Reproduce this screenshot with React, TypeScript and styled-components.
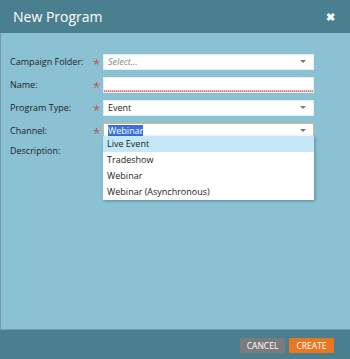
import styled, { createGlobalStyle } from "styled-components";

const GlobalStyle = createGlobalStyle`
  html, body {
    margin: 0;
    padding: 0;
    width: 350px;
    height: 359px;
    overflow: hidden;
  }
  body {
    font-family: "Open Sans", "Noto Sans", sans-serif;
  }
`;

const Dialog = styled.div`
  width: 350px;
  height: 359px;
  display: flex;
  flex-direction: column;
  box-sizing: border-box;
`;

const Header = styled.div`
  height: 33px;
  flex: none;
  background-color: #497f8f;
  display: flex;
  align-items: center;
  justify-content: space-between;
  padding: 0 15px 0 13px;
`;

const Title = styled.h2`
  margin: 0;
  font-size: 14px;
  font-weight: 400;
  color: #ffffff;
`;

const CloseButton = styled.span`
  color: #ffffff;
  font-size: 11px;
  font-weight: 700;
  line-height: 1;
  cursor: pointer;
`;

const Body = styled.div`
  flex: 1;
  background-color: #8ac1d3;
  border-left: 1px solid #7a98a2;
  padding: 18px 0 0 9px;
  display: flex;
  flex-direction: column;
  gap: 7px;
`;

const Row = styled.div`
  display: grid;
  grid-template-columns: 81px 12px 211px;
  align-items: center;
  height: 16px;
  position: relative;
`;

const Label = styled.label`
  font-size: 9px;
  color: #222;
  line-height: 16px;
  white-space: nowrap;
`;

const Required = styled.span`
  color: #c0504d;
  font-size: 13px;
  line-height: 16px;
  padding-top: 5px;
  padding-left: 2px;
`;

const Field = styled.div<{ $focused?: boolean; $spell?: boolean }>`
  box-sizing: border-box;
  height: 16px;
  background-color: #fff;
  border: 1px solid ${(p) => (p.$focused ? "#d9b98c" : "#e4eef1")};
  display: flex;
  align-items: center;
  justify-content: space-between;
  padding: 0 7px 0 4px;
  font-size: 9px;
  color: #222;
  position: relative;
  ${(p) =>
    p.$spell
      ? `background-image: repeating-linear-gradient(90deg, #e08080 0 1px, #f3c3c3 1px 2px);
         background-size: 100% 2px;
         background-position: bottom left;
         background-repeat: no-repeat;`
      : ""}
`;

const Placeholder = styled.span`
  font-style: italic;
  color: #888;
`;

const Selected = styled.span`
  background-color: #3d6fd8;
  color: #fff;
  line-height: 12px;
`;

const Arrow = styled.span`
  width: 0;
  height: 0;
  border-left: 3px solid transparent;
  border-right: 3px solid transparent;
  border-top: 3px solid #777;
`;

const Menu = styled.ul`
  position: absolute;
  top: 16px;
  left: 93px;
  width: 211px;
  box-sizing: border-box;
  margin: 0;
  padding: 0;
  list-style: none;
  background-color: #fff;
  box-shadow: 1px 1px 3px rgba(0, 0, 0, 0.3);
  z-index: 2;
`;

const Option = styled.li<{ $active?: boolean }>`
  height: 16px;
  line-height: 16px;
  padding-left: 4px;
  font-size: 9px;
  color: #222;
  background-color: ${(p) => (p.$active ? "#c4e8f7" : "#fff")};
`;

const Footer = styled.div`
  height: 30px;
  flex: none;
  background-color: #497f8f;
  border-top: 1px solid #6aa0b0;
  box-sizing: border-box;
  display: flex;
  align-items: center;
  justify-content: flex-end;
  gap: 4px;
  padding: 0 16px 0 0;
`;

const Button = styled.button<{ $primary?: boolean }>`
  width: 45px;
  height: 15px;
  border: none;
  padding: 0;
  font-family: "Open Sans", sans-serif;
  font-size: 8.5px;
  text-transform: uppercase;
  color: #fff;
  background-color: ${(p) => (p.$primary ? "#e8771f" : "#7b7b7b")};
  cursor: pointer;
  margin-top: 1px;
`;

const channelOptions = [
  "Live Event",
  "Tradeshow",
  "Webinar",
  "Webinar (Asynchronous)",
];

export default function App() {
  return (
    <>
      <GlobalStyle />
      <Dialog>
        <Header>
          <Title>New Program</Title>
          <CloseButton>✖</CloseButton>
        </Header>
        <Body>
          <Row>
            <Label>Campaign Folder:</Label>
            <Required>*</Required>
            <Field>
              <Placeholder>Select...</Placeholder>
              <Arrow />
            </Field>
          </Row>
          <Row>
            <Label>Name:</Label>
            <Required>*</Required>
            <Field $spell />
          </Row>
          <Row>
            <Label>Program Type:</Label>
            <Required>*</Required>
            <Field>
              <span>Event</span>
              <Arrow />
            </Field>
          </Row>
          <Row>
            <Label>Channel:</Label>
            <Required>*</Required>
            <Field $focused>
              <Selected>Webinar</Selected>
              <Arrow />
            </Field>
            <Menu>
              {channelOptions.map((opt, i) => (
                <Option key={opt} $active={i === 0}>
                  {opt}
                </Option>
              ))}
            </Menu>
          </Row>
          <Row>
            <Label>Description:</Label>
          </Row>
        </Body>
        <Footer>
          <Button>Cancel</Button>
          <Button $primary>Create</Button>
        </Footer>
      </Dialog>
    </>
  );
}
